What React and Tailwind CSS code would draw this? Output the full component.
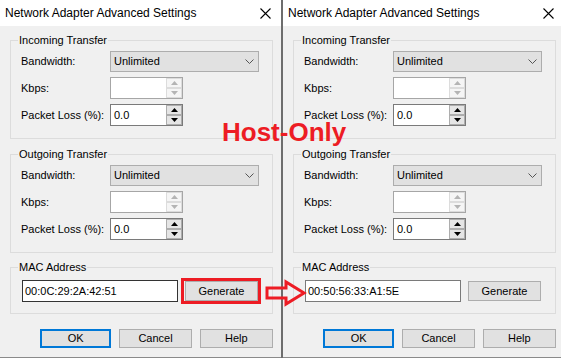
import React from "react";

const FONT = { fontFamily: '"Liberation Sans", Arial, sans-serif' };

function Chevron() {
  return (
    <svg width="9" height="5" viewBox="0 0 9 5" className="ml-auto mr-[4px]">
      <path d="M0.5 0.5 L4.5 4.5 L8.5 0.5" fill="none" stroke="#555" strokeWidth="1" />
    </svg>
  );
}

function SpinArrow({ up, color }) {
  return (
    <svg width="7" height="4" viewBox="0 0 7 4">
      <path d={up ? "M0 4 L3.5 0 L7 4Z" : "M0 0 L3.5 4 L7 0Z"} fill={color} />
    </svg>
  );
}

function Select() {
  return (
    <div className="flex items-center h-[21px] w-[149px] bg-[#e1e1e1] border border-[#adadad] pl-[3px]">
      <span>Unlimited</span>
      <Chevron />
    </div>
  );
}

function Spin({ value, enabled }) {
  const btn = enabled
    ? "border-[#adadad] bg-[#e5e5e5]"
    : "border-[#dcdcdc] bg-[#f5f5f5]";
  const arrow = enabled ? "#000" : "#b4b4b4";
  return (
    <div className={`flex h-[22px] w-[73px] bg-white border ${enabled ? "border-[#7a7a7a]" : "border-[#a6a6a6]"}`}>
      <div className="flex-1 pl-[3px] leading-[20px]">{value}</div>
      <div className="w-[16px] flex flex-col">
        <div className={`flex-1 flex items-center justify-center border ${btn}`}>
          <SpinArrow up color={arrow} />
        </div>
        <div className={`flex-1 flex items-center justify-center border ${btn}`}>
          <SpinArrow color={arrow} />
        </div>
      </div>
    </div>
  );
}

function Row({ label, children, h = "h-[22px]" }) {
  return (
    <div className={`flex items-center ${h}`}>
      <div className="w-[99px] pl-[10px]">{label}</div>
      {children}
    </div>
  );
}

function Group({ title, className, inner }) {
  return (
    <fieldset className={`border border-[#dcdcdc] p-0 m-0 ${className}`}>
      <legend className="ml-[7px] px-[1px] leading-[14px]">{title}</legend>
      {inner}
    </fieldset>
  );
}

function Transfer({ title, className }) {
  return (
    <Group
      title={title}
      className={className}
      inner={
        <div className="flex flex-col gap-[5px] pt-[4px] pb-[12px]">
          <Row label="Bandwidth:" h="h-[21px]">
            <Select />
          </Row>
          <Row label="Kbps:">
            <Spin value="" />
          </Row>
          <Row label="Packet Loss (%):">
            <Spin value="0.0" enabled />
          </Row>
        </div>
      }
    />
  );
}

function Button({ children, className }) {
  return (
    <div className={`flex items-center justify-center bg-[#e1e1e1] border border-[#adadad] ${className}`}>
      {children}
    </div>
  );
}

function Dialog({ mac, highlight }) {
  return (
    <div className="w-[281px] h-[358px] shrink-0 flex flex-col bg-[#f0f0f0] border-b border-[#8a8a8a] text-[11px] text-black">
      <div className="h-[26px] bg-white flex items-center justify-between pl-[5px] pr-[10px] text-[12px]">
        <span>Network Adapter Advanced Settings</span>
        <svg width="11" height="11" viewBox="0 0 11 11">
          <path d="M0.5 0.5 L10.5 10.5 M10.5 0.5 L0.5 10.5" stroke="#000" strokeWidth="1.1" />
        </svg>
      </div>

      <div className="flex flex-col pl-[10px] pr-[8px] pt-[7px]">
        <Transfer title="Incoming Transfer" />
        <Transfer title="Outgoing Transfer" className="mt-[8px]" />

        <Group
          title="MAC Address"
          className="mt-[7px]"
          inner={
            <div className="flex items-center pt-[6px] pb-[11px] pl-[11px]">
              <div className={`h-[22px] w-[156px] bg-white border pl-[2px] leading-[20px] ${highlight ? "border-[#333]" : "border-[#7a7a7a]"}`}>
                {mac}
              </div>
              <div className="relative ml-[7px]">
                <Button className="w-[73px] h-[20px]">Generate</Button>
                {highlight && (
                  <div className="absolute -left-[4px] -top-[3px] -right-[3px] -bottom-[3px] border-[3px] border-[#ed1c24]" />
                )}
              </div>
            </div>
          }
        />

        <div className="flex gap-[8px] pl-[30px] mt-[15px]">
          <Button className="w-[72px] h-[19px] !border-[2px] !border-[#0078d7]">OK</Button>
          <Button className="w-[73px] h-[19px]">Cancel</Button>
          <Button className="w-[74px] h-[19px]">Help</Button>
        </div>
      </div>
    </div>
  );
}

export default function App() {
  return (
    <div className="relative flex w-[561px] h-[358px] overflow-hidden bg-[#f0f0f0]" style={FONT}>
      <Dialog mac="00:0C:29:2A:42:51" highlight />
      <div className="w-[2px] shrink-0 bg-[#6d6d6d]" />
      <div className="w-[278px] shrink-0 overflow-hidden">
        <Dialog mac="00:50:56:33:A1:5E" />
      </div>

      {/* annotation overlays */}
      <div className="absolute left-[222px] top-[122px] text-[26px] leading-[20px] font-bold text-[#ed1c24]">
        Host-Only
      </div>
      <svg className="absolute left-[262px] top-[278px]" width="48" height="30" viewBox="262 278 48 30">
        <path
          d="M267 288 L286 288 L286 282 L304 293 L286 304 L286 298 L267 298 Z"
          fill="none"
          stroke="#ed1c24"
          strokeWidth="3"
          strokeLinejoin="miter"
        />
      </svg>
    </div>
  );
}
